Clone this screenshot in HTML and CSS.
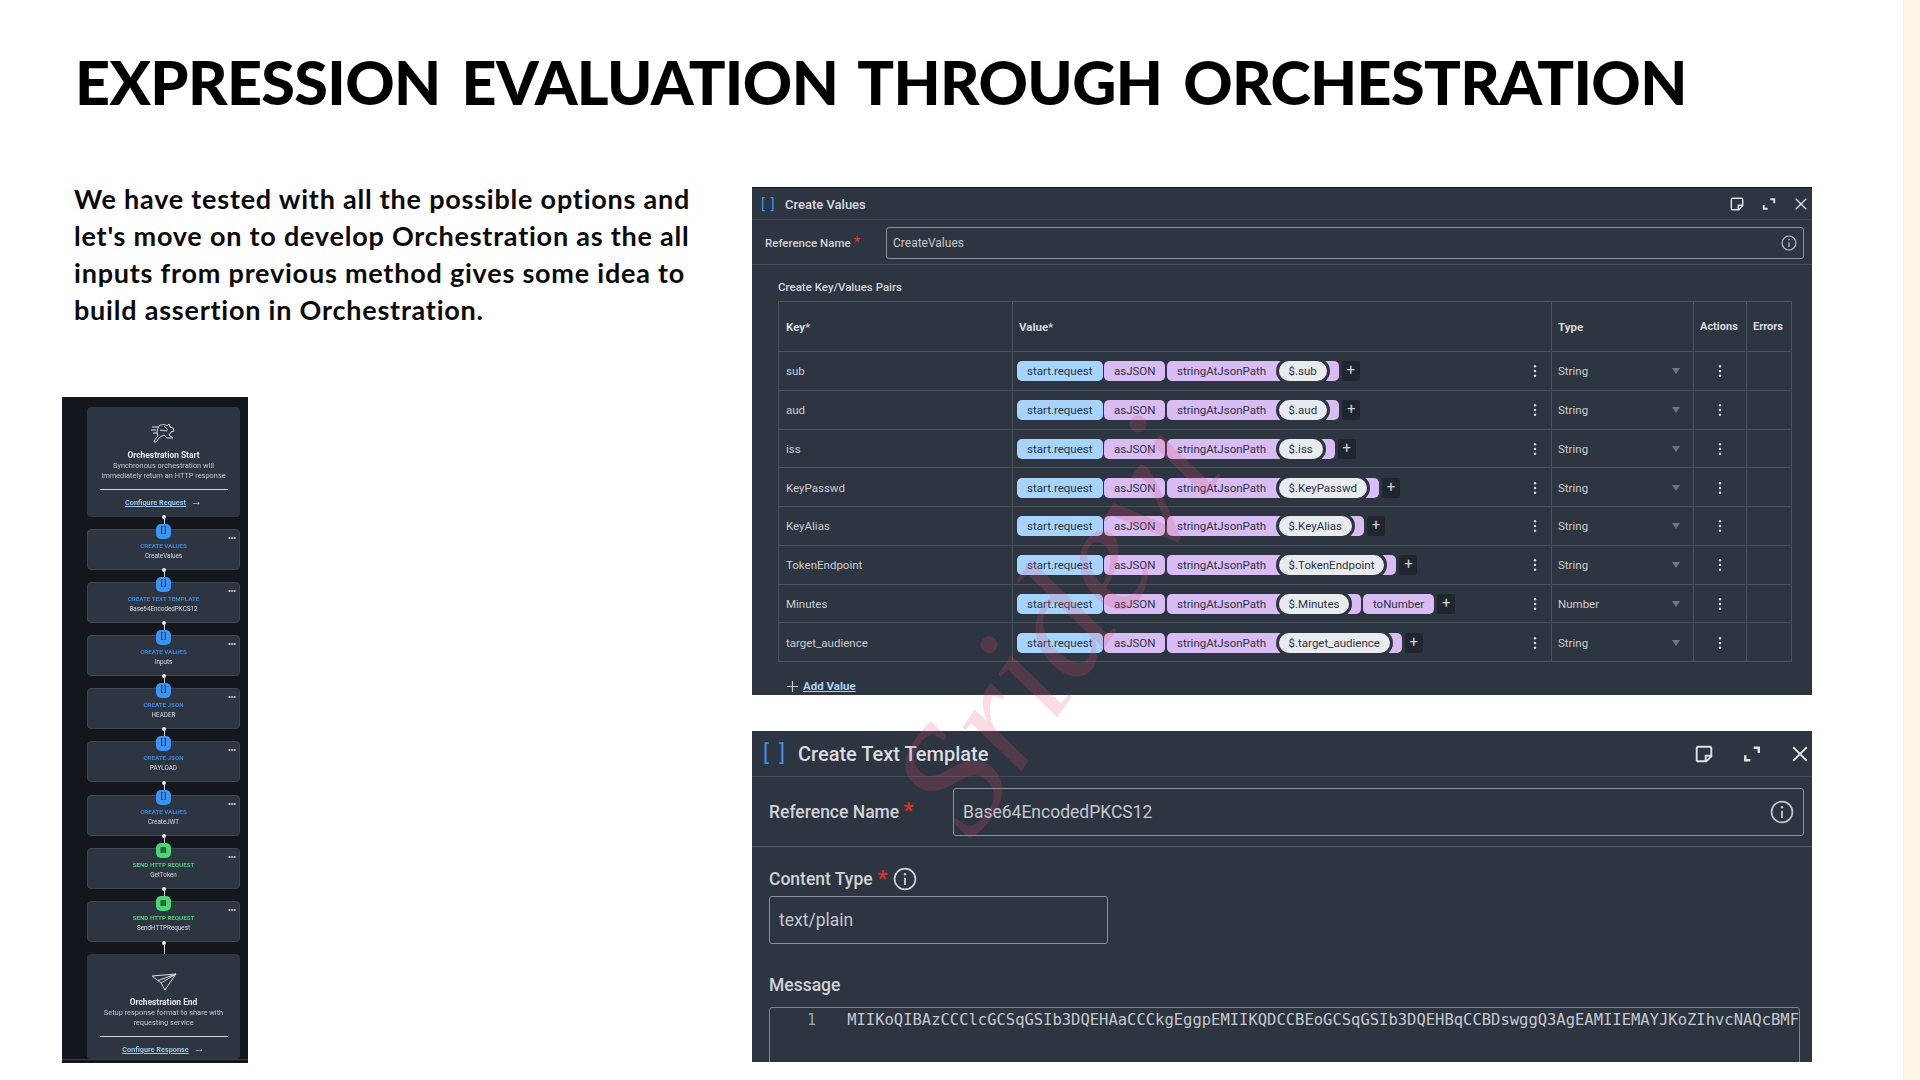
FILE: index.html
```html
<!DOCTYPE html>
<html lang="en">
<head>
    <meta charset="UTF-8">
    <meta name="viewport" content="width=device-width, initial-scale=1.0">
    <title>Expression Evaluation Through Orchestration</title>
    <link rel="stylesheet" href="styles.css">
</head>
<body>
    <!-- Shared icons -->
    <svg class="defs" width="0" height="0">
        <symbol id="kebab" viewBox="0 0 4 16"><circle cx="2" cy="2.5" r="1.4"/><circle cx="2" cy="8" r="1.4"/><circle cx="2" cy="13.5" r="1.4"/></symbol>
        <symbol id="note" viewBox="0 0 16 16"><path d="M3 1.5h10a1.5 1.5 0 0 1 1.5 1.5v7l-4.5 4.5H3A1.5 1.5 0 0 1 1.5 13V3A1.5 1.5 0 0 1 3 1.5zM14.500 9.500H9.500V14.500" fill="none" stroke="currentColor" stroke-width="1.7"/></symbol>
        <symbol id="expand" viewBox="0 0 16 16"><path d="M9.500 2.500H14V7M2 9v4.500h4.500" fill="none" stroke="currentColor" stroke-width="2.200"/></symbol>
        <symbol id="close" viewBox="0 0 16 16"><path d="M2 2l12 12M14 2L2 14" fill="none" stroke="currentColor" stroke-width="1.600"/></symbol>
        <symbol id="info" viewBox="0 0 20 20"><circle cx="10" cy="10" r="8.700" fill="none" stroke="currentColor" stroke-width="1.400"/><path d="M10 9v6" stroke="currentColor" stroke-width="1.500"/><circle cx="10" cy="6" r="1" fill="currentColor"/></symbol>
    </svg>

    <div class="page">
        <div class="slide">
            <h1 class="title">EXPRESSION EVALUATION THROUGH ORCHESTRATION</h1>

            <div class="columns">
                <!-- Left column -->
                <div class="left">
                    <p class="intro">We have tested with all the possible options and<br>let's move on to develop Orchestration as the all<br>inputs from previous method gives some idea to<br>build assertion in Orchestration.</p>

                    <div class="flow">
                        <div class="flow-end start">
                            <svg class="flow-icon" width="26" height="20" viewBox="0 0 26 20" fill="none" stroke="#d8dce2" stroke-width="1">
                                <path d="M1 4h6M0 7h5M2 10h4M8 3c3-2 6-2 8 0l2-2 1 3 3 1 1 3-3 1-2 3 4 3h-6l-3-3-4 2-4 5H3l2-4 2-2-1-3c0-3 1-5 2-7z"/>
                                <path d="M13 3l4 4M9 7l7 1"/>
                            </svg>
                            <div class="flow-title">Orchestration Start</div>
                            <div class="flow-sub">Synchronous orchestration will<br>immediately return an HTTP response</div>
                            <div class="flow-rule"></div>
                            <div class="flow-link"><u>Configure Request</u><span class="arrow">→</span></div>
                        </div>

                        <div class="node blue"><span class="badge">[ ]</span><span class="dots"></span><b>CREATE VALUES</b><span>CreateValues</span></div>
                        <div class="node blue"><span class="badge">[ ]</span><span class="dots"></span><b>CREATE TEXT TEMPLATE</b><span>Base64EncodedPKCS12</span></div>
                        <div class="node blue"><span class="badge">[ ]</span><span class="dots"></span><b>CREATE VALUES</b><span>Inputs</span></div>
                        <div class="node blue"><span class="badge">[ ]</span><span class="dots"></span><b>CREATE JSON</b><span>HEADER</span></div>
                        <div class="node blue"><span class="badge">[ ]</span><span class="dots"></span><b>CREATE JSON</b><span>PAYLOAD</span></div>
                        <div class="node blue"><span class="badge">[ ]</span><span class="dots"></span><b>CREATE VALUES</b><span>CreateJWT</span></div>
                        <div class="node green"><span class="badge">▤</span><span class="dots"></span><b>SEND HTTP REQUEST</b><span>GetToken</span></div>
                        <div class="node green"><span class="badge">▤</span><span class="dots"></span><b>SEND HTTP REQUEST</b><span>SendHTTPRequest</span></div>

                        <div class="flow-end finish">
                            <svg class="flow-icon" width="26" height="18" viewBox="0 0 26 18" fill="none" stroke="#d8dce2" stroke-width="1">
                                <path d="M1 3l24-2-11 16-4-7zM25 1L10 10M25 1L7 7.500"/>
                            </svg>
                            <div class="flow-title">Orchestration End</div>
                            <div class="flow-sub">Setup response format to share with<br>requesting service</div>
                            <div class="flow-rule"></div>
                            <div class="flow-link"><u>Configure Response</u><span class="arrow">→</span></div>
                        </div>
                        <div class="flow-foot"></div>
                    </div>
                </div>

                <!-- Right column -->
                <div class="right">
                    <section class="panel values">
                        <div class="panel-head">
                            <span class="brackets">[ ]</span>
                            <span class="panel-title">Create Values</span>
                            <span class="head-icons">
                                <svg width="14" height="14"><use href="#note"/></svg>
                                <svg width="14" height="14"><use href="#expand"/></svg>
                                <svg width="14" height="14"><use href="#close"/></svg>
                            </span>
                        </div>
                        <div class="ref-row">
                            <label class="ref-label">Reference Name <i>*</i></label>
                            <div class="input"><span>CreateValues</span><svg width="16" height="16"><use href="#info"/></svg></div>
                        </div>
                        <div class="pairs">
                            <div class="pairs-title">Create Key/Values Pairs</div>
                            <table class="kv">
                                <colgroup><col class="c-key"><col class="c-val"><col class="c-type"><col class="c-act"><col class="c-err"></colgroup>
                                <thead>
                                    <tr><th>Key<i>*</i></th><th>Value<i>*</i></th><th>Type</th><th>Actions</th><th>Errors</th></tr>
                                </thead>
                                <tbody>
                                    <tr>
                                        <td>sub</td>
                                        <td><div class="expr"><span class="pill src">start.request</span><span class="pill fn">asJSON</span><span class="pill fn open">stringAtJsonPath</span><span class="lit">$.sub</span><span class="pill shut"></span><span class="add">+</span><svg class="kebab" width="4" height="14"><use href="#kebab"/></svg></div></td>
                                        <td><div class="type">String<span class="caret"></span></div></td>
                                        <td class="act"><svg class="kebab" width="4" height="14"><use href="#kebab"/></svg></td>
                                        <td></td>
                                    </tr>
                                    <tr>
                                        <td>aud</td>
                                        <td><div class="expr"><span class="pill src">start.request</span><span class="pill fn">asJSON</span><span class="pill fn open">stringAtJsonPath</span><span class="lit">$.aud</span><span class="pill shut"></span><span class="add">+</span><svg class="kebab" width="4" height="14"><use href="#kebab"/></svg></div></td>
                                        <td><div class="type">String<span class="caret"></span></div></td>
                                        <td class="act"><svg class="kebab" width="4" height="14"><use href="#kebab"/></svg></td>
                                        <td></td>
                                    </tr>
                                    <tr>
                                        <td>iss</td>
                                        <td><div class="expr"><span class="pill src">start.request</span><span class="pill fn">asJSON</span><span class="pill fn open">stringAtJsonPath</span><span class="lit">$.iss</span><span class="pill shut"></span><span class="add">+</span><svg class="kebab" width="4" height="14"><use href="#kebab"/></svg></div></td>
                                        <td><div class="type">String<span class="caret"></span></div></td>
                                        <td class="act"><svg class="kebab" width="4" height="14"><use href="#kebab"/></svg></td>
                                        <td></td>
                                    </tr>
                                    <tr>
                                        <td>KeyPasswd</td>
                                        <td><div class="expr"><span class="pill src">start.request</span><span class="pill fn">asJSON</span><span class="pill fn open">stringAtJsonPath</span><span class="lit">$.KeyPasswd</span><span class="pill shut"></span><span class="add">+</span><svg class="kebab" width="4" height="14"><use href="#kebab"/></svg></div></td>
                                        <td><div class="type">String<span class="caret"></span></div></td>
                                        <td class="act"><svg class="kebab" width="4" height="14"><use href="#kebab"/></svg></td>
                                        <td></td>
                                    </tr>
                                    <tr>
                                        <td>KeyAlias</td>
                                        <td><div class="expr"><span class="pill src">start.request</span><span class="pill fn">asJSON</span><span class="pill fn open">stringAtJsonPath</span><span class="lit">$.KeyAlias</span><span class="pill shut"></span><span class="add">+</span><svg class="kebab" width="4" height="14"><use href="#kebab"/></svg></div></td>
                                        <td><div class="type">String<span class="caret"></span></div></td>
                                        <td class="act"><svg class="kebab" width="4" height="14"><use href="#kebab"/></svg></td>
                                        <td></td>
                                    </tr>
                                    <tr>
                                        <td>TokenEndpoint</td>
                                        <td><div class="expr"><span class="pill src">start.request</span><span class="pill fn">asJSON</span><span class="pill fn open">stringAtJsonPath</span><span class="lit">$.TokenEndpoint</span><span class="pill shut"></span><span class="add">+</span><svg class="kebab" width="4" height="14"><use href="#kebab"/></svg></div></td>
                                        <td><div class="type">String<span class="caret"></span></div></td>
                                        <td class="act"><svg class="kebab" width="4" height="14"><use href="#kebab"/></svg></td>
                                        <td></td>
                                    </tr>
                                    <tr>
                                        <td>Minutes</td>
                                        <td><div class="expr"><span class="pill src">start.request</span><span class="pill fn">asJSON</span><span class="pill fn open">stringAtJsonPath</span><span class="lit">$.Minutes</span><span class="pill shut"></span><span class="pill fn">toNumber</span><span class="add">+</span><svg class="kebab" width="4" height="14"><use href="#kebab"/></svg></div></td>
                                        <td><div class="type">Number<span class="caret"></span></div></td>
                                        <td class="act"><svg class="kebab" width="4" height="14"><use href="#kebab"/></svg></td>
                                        <td></td>
                                    </tr>
                                    <tr>
                                        <td>target_audience</td>
                                        <td><div class="expr"><span class="pill src">start.request</span><span class="pill fn">asJSON</span><span class="pill fn open">stringAtJsonPath</span><span class="lit">$.target_audience</span><span class="pill shut"></span><span class="add">+</span><svg class="kebab" width="4" height="14"><use href="#kebab"/></svg></div></td>
                                        <td><div class="type">String<span class="caret"></span></div></td>
                                        <td class="act"><svg class="kebab" width="4" height="14"><use href="#kebab"/></svg></td>
                                        <td></td>
                                    </tr>
                                </tbody>
                            </table>
                            <div class="add-value">
                                <svg class="add-plus" width="11" height="11" viewBox="0 0 11 11"><path d="M5.500 0v11M0 5.500h11" fill="none" stroke="#c9cdd3" stroke-width="1.200"/></svg>
                                <u>Add Value</u>
                            </div>
                        </div>
                    </section>

                    <section class="panel template">
                        <div class="panel-head">
                            <span class="brackets">[ ]</span>
                            <span class="panel-title">Create Text Template</span>
                            <span class="head-icons">
                                <svg width="18" height="18"><use href="#note"/></svg>
                                <svg width="18" height="18"><use href="#expand"/></svg>
                                <svg width="18" height="18"><use href="#close"/></svg>
                            </span>
                        </div>
                        <div class="ref-row">
                            <label class="ref-label">Reference Name <i>*</i></label>
                            <div class="input"><span>Base64EncodedPKCS12</span><svg width="24" height="24"><use href="#info"/></svg></div>
                        </div>
                        <div class="template-body">
                            <label class="field-label">Content Type <i>*</i><svg width="24" height="24"><use href="#info"/></svg></label>
                            <div class="input short"><span>text/plain</span></div>
                            <label class="field-label message">Message</label>
                            <div class="editor">
                                <span class="line-no">1</span>
                                <code>MIIKoQIBAzCCClcGCSqGSIb3DQEHAaCCCkgEggpEMIIKQDCCBEoGCSqGSIb3DQEHBqCCBDswggQ3AgEAMIIEMAYJKoZIhvcNAQcBMF</code>
                            </div>
                        </div>
                    </section>
                </div>
            </div>
        </div>
        <div class="band"></div>

        <div class="watermark">Sridevi</div>
    </div>
</body>
</html>
```

FILE: styles.css
```css
* {
    box-sizing: border-box;
}
html, body {
    margin: 0;
    height: 100%;
    background: #fff;
    overflow: hidden;
}
.defs {
    position: absolute;
}
.page {
    display: flex;
    width: 1920px;
    height: 1080px;
    overflow: hidden;
}
.slide {
    width: 1903px;
}
.band {
    width: 17px;
    background: #fff5e4;
}

/* Heading */
.title {
    margin: 0;
    padding: 46px 0 0 75px;
    height: 187px;
    font: 900 61px/72px Lato, sans-serif;
    letter-spacing: -0.6px;
    word-spacing: 7px;
    color: #000;
    white-space: nowrap;
}
.columns {
    display: flex;
}

/* Left column */
.left {
    width: 752px;
    padding-left: 62px;
}
.intro {
    margin: -7px 0 0;
    padding-left: 12px;
    height: 217px;
    font: 700 27px/37px Lato, sans-serif;
    letter-spacing: 0.78px;
    color: #0a0a0a;
    white-space: nowrap;
}
.flow {
    display: flex;
    flex-direction: column;
    width: 186px;
    height: 666px;
    padding: 10px 8px 0 25px;
    background: #13171d;
    font-family: Roboto, sans-serif;
    color: #d8dce2;
    overflow: hidden;
    filter: blur(0.3px);
}
.flow-end {
    position: relative;
    flex: none;
    display: flex;
    flex-direction: column;
    align-items: center;
    background: #2d3540;
    border-radius: 4px;
}
.flow-end.start {
    height: 110px;
    padding-top: 16px;
}
.flow-end.finish {
    height: 105px;
    margin-top: 12px;
    padding-top: 19px;
}
.flow-icon {
    flex: none;
}
.flow-title {
    margin-top: 6px;
    font-size: 8.400px;
    line-height: 12px;
    font-weight: 700;
    color: #e6e8ec;
}
.finish .flow-title {
    margin-top: 5px;
}
.flow-sub {
    font-size: 7.400px;
    line-height: 10px;
    text-align: center;
    color: #c4c8ce;
    white-space: nowrap;
}
.flow-rule {
    width: 128px;
    margin-top: 8px;
    border-top: 1px solid #d5d8dc;
}
.flow-link {
    margin-top: 6px;
    font-size: 7.300px;
    line-height: 12px;
    font-weight: 700;
    color: #9cc6ea;
    white-space: nowrap;
}
.arrow {
    margin-left: 5px;
    font-size: 11px;
    font-weight: 400;
    color: #e4e6ea;
}
.flow-foot {
    flex: none;
    height: 5px;
    margin: 0 -8px 0 -25px;
    background: #13171d;
    border-top: 1px solid #3a424c;
}

/* One step of the orchestration */
.node {
    position: relative;
    flex: none;
    display: flex;
    flex-direction: column;
    align-items: center;
    height: 41px;
    margin-top: 12.100px;
    padding-top: 11px;
    background: #2d3540;
    border: 1px solid #3d4650;
    border-radius: 4px;
    font-size: 6.300px;
    line-height: 10px;
    white-space: nowrap;
}
.node b {
    font-size: 6.200px;
    font-weight: 700;
}
.node.blue b {
    color: #3d87dc;
}
.node.green b {
    color: #4ccb74;
}
/* white port and wire above each step */
.node::before, .finish::before {
    content: "";
    position: absolute;
    left: 74px;
    top: -15px;
    width: 4px;
    height: 4px;
    border-radius: 50%;
    background: #e8e8e8;
}
.node::after, .finish::after {
    content: "";
    position: absolute;
    left: 75.500px;
    top: -12px;
    width: 1px;
    height: 7px;
    background: #cfd2d6;
}
.finish::before {
    top: -13px;
    left: 75px;
}
.finish::after {
    top: -10px;
    left: 76.500px;
    height: 10px;
}
.badge {
    position: absolute;
    z-index: 1;
    left: 68px;
    top: -6px;
    width: 15px;
    height: 15px;
    border-radius: 5px;
    font-size: 7px;
    font-weight: 700;
    line-height: 15px;
    text-align: center;
    color: #16365c;
}
.blue .badge {
    background: #3a94f5;
}
.green .badge {
    background: #4bd673;
    color: #1c4a2c;
}
.dots {
    position: absolute;
    right: 3px;
    top: 7px;
    width: 8px;
    height: 2px;
    background: radial-gradient(circle, #d5d8dc 0.9px, transparent 1.1px) 0 0 / 2.700px 2px;
}

/* Right column panels */
.right {
    width: 1060px;
    display: flex;
    flex-direction: column;
    font-family: Roboto, sans-serif;
}
.panel {
    background: #2d3540;
    color: #c9cdd3;
    overflow: hidden;
}
.panel-head {
    display: flex;
    align-items: center;
}
.brackets {
    color: #3f8fe6;
    font-weight: 400;
    word-spacing: 2px;
}
.panel-title {
    font-weight: 500;
    color: #d9dce0;
}
.head-icons {
    margin-left: auto;
    display: flex;
    align-items: center;
    color: #dfe2e6;
}
.head-icons svg {
    display: block;
}
.ref-row {
    display: flex;
    align-items: center;
}
.ref-label {
    font-weight: 500;
    color: #d0d3d8;
    white-space: nowrap;
}
.ref-label i, .field-label i {
    font-style: normal;
    font-size: 1.300em;
    line-height: 0.8;
    color: #d8352f;
}
.kv th i {
    font-style: normal;
    color: #c9cdd3;
}
.input {
    display: flex;
    align-items: center;
    justify-content: space-between;
    border: 1px solid #8b929b;
    border-radius: 3px;
    color: #c4c8ce;
}
.input svg {
    flex: none;
}

/* Create Values */
.values {
    height: 508px;
    border-top: 1px solid #15181d;
}
.values .panel-head {
    height: 32px;
    padding: 1px 4px 0 9px;
    border-bottom: 1px solid #3c444e;
}
.values .brackets {
    font-size: 15px;
    width: 24px;
}
.values .panel-title {
    font-size: 13px;
}
.values .head-icons {
    gap: 18px;
}
.values .ref-row {
    height: 45px;
    padding: 1px 8px 0 13px;
    border-bottom: 1px solid #454d57;
}
.values .ref-label {
    width: 121px;
    font-size: 11.500px;
}
.values .input {
    flex: 1;
    height: 32px;
    padding: 0 6px;
    font-size: 12px;
}
.pairs {
    padding: 14px 0 0 26px;
}
.pairs-title {
    font-size: 11.500px;
    font-weight: 500;
    line-height: 16px;
    margin-bottom: 6px;
    color: #d4d7db;
}
.kv {
    width: 1013px;
    table-layout: fixed;
    border-collapse: collapse;
    font-size: 11.500px;
}
.c-key { width: 234px; }
.c-val { width: 539px; }
.c-type { width: 142px; }
.c-act { width: 53px; }
.c-err { width: 45px; }
.kv th, .kv td {
    padding: 0 6px;
    border: 1px solid #4a525c;
    white-space: nowrap;
}
.kv th:first-child, .kv td:first-child {
    padding-left: 7px;
}
.kv th {
    height: 50px;
    text-align: left;
    font-weight: 700;
    color: #d8dbdf;
}
.kv th:nth-child(n+4) {
    font-size: 11px;
}
.kv td {
    height: 38.750px;
    padding-top: 1px;
}
.kv .kebab {
    display: block;
    fill: #d5d8dc;
}
.kv td.act .kebab {
    margin: 0 auto;
}
.type {
    display: flex;
    align-items: center;
    justify-content: space-between;
}
.caret {
    width: 0;
    height: 0;
    margin-right: 7px;
    border-left: 4px solid transparent;
    border-right: 4px solid transparent;
    border-top: 6px solid #6f767f;
}
.expr {
    display: flex;
    align-items: center;
    margin-left: -2px;
}
.expr .kebab {
    margin-left: auto;
    margin-right: 8px;
}
.pill {
    height: 20px;
    padding: 0 10px;
    border-radius: 5px;
    line-height: 20px;
    color: #2b3440;
}
.src {
    background: #a6d4ff;
}
.fn {
    margin-left: 1.500px;
    background: #d8bcf3;
}
.open {
    padding-right: 22px;
    margin-right: -9.500px;
}
.lit {
    position: relative;
    height: 20px;
    padding: 0 10px;
    border-radius: 10px;
    line-height: 20px;
    background: #e9ebef;
    color: #2b3440;
    box-shadow: 0 0 0 3px #2d3540;
}
.shut {
    width: 24px;
    padding: 0;
    margin-left: -12px;
    background: #d8bcf3;
}
.add {
    display: block;
    width: 18px;
    height: 20px;
    margin-left: 3px;
    border-radius: 2px;
    background: #20262e;
    font-size: 15px;
    line-height: 19px;
    text-align: center;
    color: #d0d3d8;
}
.add-value {
    display: flex;
    align-items: center;
    margin: 18px 0 0 9px;
    font-size: 11.500px;
    line-height: 13px;
    font-weight: 700;
    color: #a9d3f5;
}
.add-plus {
    flex: none;
    margin-right: 5px;
}

/* Create Text Template */
.template {
    height: 331px;
    margin-top: 36px;
}
.template .panel-head {
    height: 46px;
    padding: 0 3px 0 11px;
    border-bottom: 1px solid #444c56;
}
.template .brackets {
    font-size: 22px;
    width: 35px;
    word-spacing: 5px;
}
.template .panel-title {
    font-size: 20px;
}
.template .head-icons {
    gap: 30px;
}
.template .ref-row {
    height: 70px;
    padding: 0 8px 0 17px;
    border-bottom: 1px solid #555d67;
}
.template .ref-label {
    width: 184px;
    font-size: 17.500px;
}
.template .input {
    flex: 1;
    height: 48px;
    padding: 0 9px;
    font-size: 17.500px;
}
.template-body {
    padding: 20px 0 0 17px;
}
.field-label {
    display: flex;
    align-items: center;
    gap: 5px;
    height: 24px;
    font-size: 17.500px;
    font-weight: 500;
    color: #d0d3d8;
}
.input.short {
    width: 339px;
    height: 48px;
    margin-top: 5px;
    padding: 0 9px;
}
.message {
    margin-top: 29px;
}
.editor {
    display: flex;
    align-items: flex-start;
    width: 1031px;
    height: 80px;
    margin-top: 10px;
    padding: 0 0 0 37px;
    border: 1px solid #7d858e;
    border-radius: 3px 3px 0 0;
    color: #c4c8ce;
}
.line-no {
    width: 41px;
    margin-top: 2px;
    font: 15px/20px "DejaVu Sans Mono", monospace;
    color: #9fa5ad;
}
.editor code {
    margin-top: 2px;
    font: 15.500px/20px "DejaVu Sans Mono", monospace;
    white-space: nowrap;
}

/* Pink signature laid over everything */
.watermark {
    position: absolute;
    left: 825px;
    top: 540px;
    width: 460px;
    transform: rotate(-56deg);
    font: italic 400 160px/170px "Liberation Serif", serif;
    color: rgba(232, 80, 120, 0.2);
    text-align: center;
    white-space: nowrap;
    pointer-events: none;
}
```
